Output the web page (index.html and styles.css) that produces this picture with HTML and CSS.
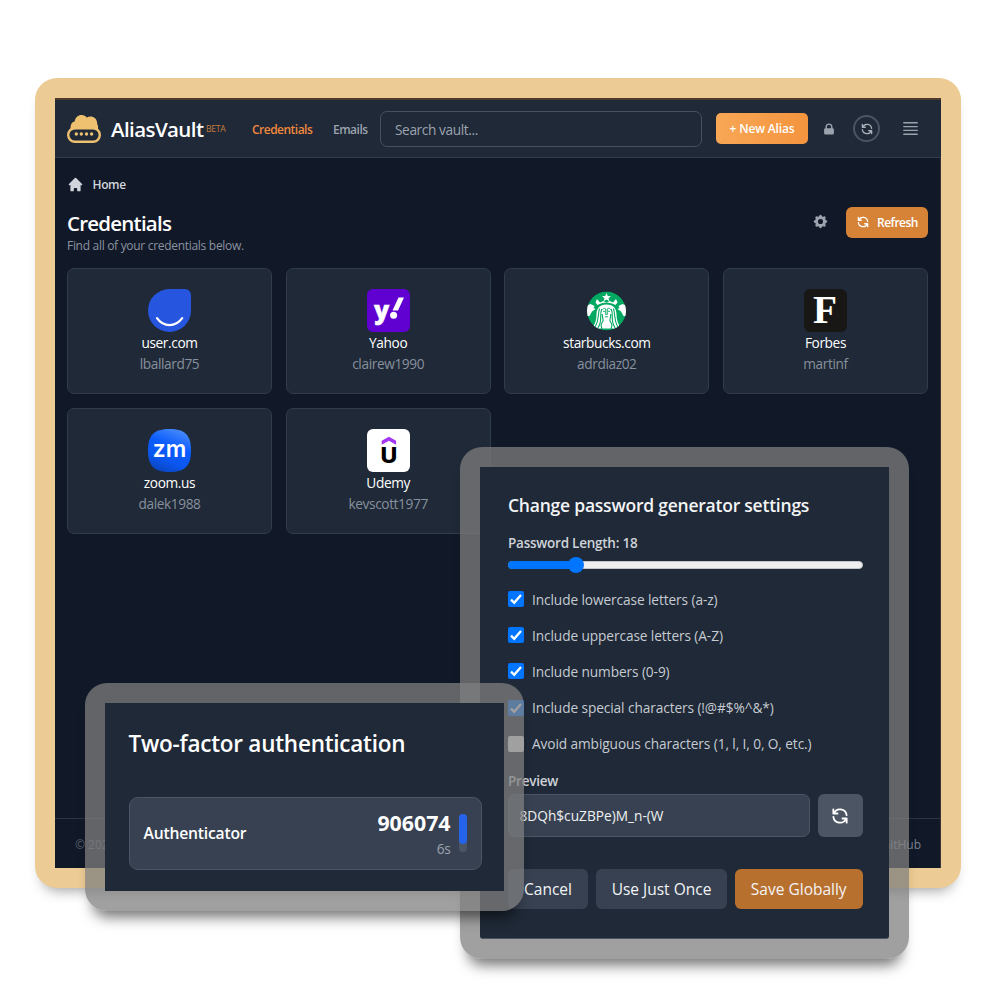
FILE: index.html
```html
<!DOCTYPE html>
<html lang="en">
<head>
<meta charset="utf-8">
<title>AliasVault</title>
<link rel="stylesheet" href="styles.css">
</head>
<body>
<svg width="0" height="0" class="defs">
  <symbol id="sync" viewBox="0 0 24 24"><path fill="none" stroke="currentColor" stroke-width="2.200" stroke-linecap="round" stroke-linejoin="round" d="M4 4v5h.582m15.356 2A8.001 8.001 0 004.582 9m0 0H9m11 11v-5h-.581m0 0a8.003 8.003 0 01-15.357-2m15.357 2H15"/></symbol>
</svg>

<section class="window vault">
  <div class="app">
    <header class="topbar">
      <svg class="brand-mark" viewBox="0 0 34 28">
        <path fill="#eec170" d="M3.600 14.500C3 9.500 5 7 7.600 6.600 8.300 2.500 11 0 14.600 0 17 0 18.800 1 19.800 2.500 24-.2 30.500 2.500 30.200 9c1 1.500 1.200 3.500.6 5.500z"/>
        <rect x="1.200" y="13.200" width="31.600" height="13.600" rx="6.800" fill="#1f2937" stroke="#eec170" stroke-width="2.400"/>
        <g fill="#eec170"><circle cx="9.300" cy="19" r="1.700"/><circle cx="14.300" cy="19" r="1.700"/><circle cx="19.500" cy="19" r="1.700"/><circle cx="24.600" cy="19" r="1.700"/></g>
      </svg>
      <span class="brand-name">AliasVault</span><sup class="beta">BETA</sup>
      <nav class="nav"><a class="active">Credentials</a><a>Emails</a></nav>
      <div class="search">Search vault...</div>
      <button class="new-alias">+ New Alias</button>
      <svg class="lock" viewBox="0 0 20 20"><path fill="currentColor" fill-rule="evenodd" d="M5 9V7a5 5 0 0110 0v2a2 2 0 012 2v5a2 2 0 01-2 2H5a2 2 0 01-2-2v-5a2 2 0 012-2zm8-2v2H7V7a3 3 0 016 0z"/></svg>
      <span class="sync-ring"><svg><use href="#sync"/></svg></span>
      <svg class="menu" viewBox="0 0 15 13"><path stroke="currentColor" stroke-width="1.400" stroke-linecap="round" d="M.8 .8h13.400M.8 4.600h13.400M.8 8.400h13.400M.8 12.200h13.400"/></svg>
    </header>

    <main class="page">
      <div class="crumb">
        <svg viewBox="0 0 20 20"><path fill="currentColor" d="M10.707 2.293a1 1 0 00-1.414 0l-7 7a1 1 0 001.414 1.414L4 10.414V17a1 1 0 001 1h2a1 1 0 001-1v-2a1 1 0 011-1h2a1 1 0 011 1v2a1 1 0 001 1h2a1 1 0 001-1v-6.586l.293.293a1 1 0 001.414-1.414l-7-7z"/></svg>
        <span>Home</span>
      </div>
      <div class="heading">
        <div class="heading-text">
          <h1>Credentials</h1>
          <p>Find all of your credentials below.</p>
        </div>
        <svg class="cog" viewBox="0 0 20 20"><path fill="currentColor" fill-rule="evenodd" d="M11.490 3.170c-.38-1.560-2.600-1.560-2.980 0a1.532 1.532 0 01-2.286.948c-1.372-.836-2.942.734-2.106 2.106.54.886.061 2.042-.947 2.287-1.561.379-1.561 2.600 0 2.978a1.532 1.532 0 01.947 2.287c-.836 1.372.734 2.942 2.106 2.106a1.532 1.532 0 012.287.947c.379 1.561 2.600 1.561 2.978 0a1.533 1.533 0 012.287-.947c1.372.836 2.942-.734 2.106-2.106a1.533 1.533 0 01.947-2.287c1.561-.379 1.561-2.600 0-2.978a1.532 1.532 0 01-.947-2.287c.836-1.372-.734-2.942-2.106-2.106a1.532 1.532 0 01-2.287-.947zM10 13a3 3 0 100-6 3 3 0 000 6z"/></svg>
        <button class="refresh"><svg><use href="#sync"/></svg><span>Refresh</span></button>
      </div>

      <div class="cards">
        <article class="card">
          <svg viewBox="0 0 43 43"><path fill="#2656e0" d="M21.500 0H37a6 6 0 016 6v15.500A21.500 21.500 0 1121.500 0z"/><path fill="none" stroke="#fff" stroke-width="2.200" stroke-linecap="round" d="M9 29.200c6.500 9.300 18.500 9.300 25.200 0"/></svg>
          <b>user.com</b><i>lballard75</i>
        </article>
        <article class="card">
          <svg viewBox="0 0 43 43"><rect width="43" height="43" rx="6" fill="#6001d2"/><text class="logo-y" x="7" y="30">y</text><path fill="#fff" d="M31.500 8.500H37L31 21.500h-5.500z"/><circle cx="26.600" cy="26.300" r="3.500" fill="#fff"/></svg>
          <b>Yahoo</b><i>clairew1990</i>
        </article>
        <article class="card">
          <svg viewBox="0 0 43 43">
            <clipPath id="disc"><circle cx="21.500" cy="22" r="19.500"/></clipPath>
            <g clip-path="url(#disc)">
              <circle cx="21.500" cy="22" r="19.500" fill="#00a862"/>
              <path fill="#fff" d="M21.500 4l1.300 3 3.200.2-2.500 2 .9 3.100-2.900-1.700-2.900 1.700.9-3.100-2.500-2 3.200-.2zM12 10l3 3.500 3.500-1.500 3 2 3-2 3.500 1.500L31 10l1.500 3.500-2 2.500c-5.500-3.400-12.500-3.400-18 0l-2-2.500z"/>
              <path fill="#fff" d="M21.500 15.500c-7 0-10 4-10 10 0 5-1.500 10-4.500 14h29c-3-4-4.500-9-4.500-14 0-6-3-10-10-10z"/>
              <path fill="#fff" d="M1 17l4.500-2 4 2-1 2 2 1-3.500 2.500-2.500 4.500-4 .5zM42 17l-4.500-2-4 2 1 2-2 1 3.500 2.500 2.500 4.500 4 .5z"/>
              <path fill="none" stroke="#00a862" stroke-width="1.100" d="M14.500 19.500c-2 7 0 11-4.500 19M16.800 20c-3 7 1.500 11-4 19M28.500 19.500c2 7 0 11 4.500 19M26.200 20c3 7-1.500 11 4 19M17.200 25c0 5 2 6 .3 8-2 2.500-1.500 4-.5 7M25.800 25c0 5-2 6-.3 8 2 2.500 1.500 4 .5 7"/>
              <path fill="none" stroke="#00a862" stroke-width=".9" d="M17.300 20.500c1.500-1.500 2.700-1.500 3.400-.5v5.500h1.600V20c.7-1 1.900-1 3.400.5M18 22.300h2M23 22.300h2M19.900 27.800h3.200"/>
            </g>
          </svg>
          <b>starbucks.com</b><i>adrdiaz02</i>
        </article>
        <article class="card">
          <svg viewBox="0 0 43 43"><rect width="43" height="43" rx="6" fill="#181716"/><text class="logo-f" x="9" y="34" textLength="24" lengthAdjust="spacingAndGlyphs">F</text></svg>
          <b>Forbes</b><i>martinf</i>
        </article>
        <article class="card">
          <svg viewBox="0 0 43 43"><defs><linearGradient id="zg" x1=".75" y1="0" x2=".35" y2="1"><stop offset="0" stop-color="#4a8df8"/><stop offset=".4" stop-color="#0b5cff"/><stop offset=".75" stop-color="#0b56ee"/><stop offset="1" stop-color="#0a47c4"/></linearGradient></defs><path fill="url(#zg)" d="M21.500 0C37 0 43 6 43 21.500S37 43 21.500 43 0 37 0 21.500 6 0 21.500 0z"/><text class="logo-zm" x="4.800" y="27.800" textLength="33.500" lengthAdjust="spacingAndGlyphs">zm</text></svg>
          <b>zoom.us</b><i>dalek1988</i>
        </article>
        <article class="card">
          <svg viewBox="0 0 43 43"><rect width="43" height="43" rx="6" fill="#fff"/><path fill="#a435f0" d="M21.900 7.700l7.200 4.100v4l-7.200-4.100-7.200 4.100v-4z"/><text class="logo-u" x="13.500" y="34.200" textLength="16.800" lengthAdjust="spacingAndGlyphs">U</text></svg>
          <b>Udemy</b><i>kevscott1977</i>
        </article>
      </div>
    </main>

    <footer class="footer"><span>© 2024 AliasVault</span><span>GitHub</span></footer>
  </div>
</section>

<section class="window generator">
  <div class="panel settings">
    <h2>Change password generator settings</h2>
    <div class="field-label">Password Length: 18</div>
    <div class="slider"><div class="fill"></div></div>
    <ul class="options">
      <li><span class="box on"><svg viewBox="0 0 16 16"><path d="M3 8.600l3.200 3.200L13 3.900"/></svg></span>Include lowercase letters (a-z)</li>
      <li><span class="box on"><svg viewBox="0 0 16 16"><path d="M3 8.600l3.200 3.200L13 3.900"/></svg></span>Include uppercase letters (A-Z)</li>
      <li><span class="box on"><svg viewBox="0 0 16 16"><path d="M3 8.600l3.200 3.200L13 3.900"/></svg></span>Include numbers (0-9)</li>
      <li><span class="box on"><svg viewBox="0 0 16 16"><path d="M3 8.600l3.200 3.200L13 3.900"/></svg></span>Include special characters (!@#$%^&amp;*)</li>
      <li><span class="box"></span>Avoid ambiguous characters (1, l, I, 0, O, etc.)</li>
    </ul>
    <div class="field-label">Preview</div>
    <div class="preview">
      <div class="preview-value">8DQh$cuZBPe)M_n-(W</div>
      <button class="again"><svg><use href="#sync"/></svg></button>
    </div>
    <div class="actions">
      <button class="cancel">Cancel</button>
      <button class="once">Use Just Once</button>
      <button class="save">Save Globally</button>
    </div>
  </div>
</section>

<section class="window twofactor">
  <div class="panel totp">
    <h2>Two-factor authentication</h2>
    <div class="code-row">
      <span class="code-name">Authenticator</span>
      <div class="code"><strong>906074</strong><small>6s</small></div>
      <div class="timer"><div></div></div>
    </div>
  </div>
</section>
</body>
</html>
```
FILE: styles.css
```css
* { box-sizing: border-box; margin: 0; padding: 0; }
body {
  position: relative;
  width: 1000px;
  height: 1000px;
  overflow: hidden;
  background: #fff;
  font-family: "Open Sans", "Noto Sans", sans-serif;
  color: #fff;
}
button { border: 0; font: inherit; color: inherit; letter-spacing: inherit; white-space: nowrap; }
svg { display: block; flex: none; }
span, b, i, strong, small, a, h1, h2, p { white-space: nowrap; }
.defs { position: absolute; }

/* Overlapping windows on the canvas */
.window {
  position: absolute;
  border-radius: 22px;
  padding: 20px;
  box-shadow: 0 14px 14px -8px rgba(0, 0, 0, .55);
}
.vault { left: 35px; top: 78px; width: 926px; height: 809.500px; background: #eccb94; box-shadow: 0 10px 14px -8px rgba(0, 0, 0, .4); }
.generator { left: 460px; top: 447px; width: 449px; height: 512px; background: rgba(127, 127, 127, .74); }
.twofactor { left: 85px; top: 683px; width: 439px; height: 228px; background: rgba(127, 127, 127, .74); }

/* Vault app */
.app { height: 100%; display: flex; flex-direction: column; background: #111827; border-top: 2px solid #4f3a2c; box-shadow: inset -1px 0 #3a3238; }
.topbar {
  display: flex;
  align-items: center;
  height: 58px;
  padding: 1px 22px 0 12px;
  background: #1f2937;
  border-bottom: 1px solid #303c4b;
  flex: none;
}
.brand-mark { width: 34px; height: 28px; margin-top: -1px; }
.brand-name { margin-left: 10px; font-size: 20.500px; font-weight: 600; width: 94px; letter-spacing: -.029em; }
.beta { margin-left: 1px; font-size: 8.700px; color: #c87a3c; width: 20px; line-height: 12px; letter-spacing: -.04em; }
.nav { display: flex; gap: 20px; margin-left: 26px; font-size: 12px; font-weight: 600; color: #9ca3af; letter-spacing: -.043em; }
.nav .active { color: #f0883e; width: 61px; }
.nav a { width: 35px; }
.search { flex: none; width: 322px; height: 36px; margin: -1px 0 0 12px; border: 1px solid #465160; border-radius: 7px; padding-left: 14px; font-size: 13.700px; line-height: 35px; color: #9ca3af; letter-spacing: -.029em; }
.new-alias { width: 92px; height: 31px; margin-top: -1px; margin-left: 14px; border-radius: 5px; background: linear-gradient(90deg, #f8a755, #f4943f); font-size: 12px; font-weight: 600; line-height: 32px; letter-spacing: -.012em; }
.lock { width: 14px; height: 14px; margin-left: 14px; color: #9ca3af; }
.sync-ring { display: flex; align-items: center; justify-content: center; width: 27px; height: 27px; margin-left: 17px; border: 2px solid #4b5563; border-radius: 50%; color: #aab0ba; margin-top: -1px; }
.sync-ring svg { width: 14px; height: 14px; }
.menu { width: 15px; height: 13px; margin-left: 23px; color: #9ca3af; margin-top: -1px; }

.page { flex: 1; padding: 16px 13px 0 12px; }
.crumb { display: flex; align-items: center; height: 20px; font-size: 12px; font-weight: 600; color: #d1d5db; letter-spacing: -.03em; }
.crumb svg { width: 17px; height: 17px; margin-right: 8.500px; }
.heading { display: flex; align-items: flex-start; margin-top: 12px; height: 54px; }
.heading-text { flex: 1; }
h1 { font-size: 20.500px; line-height: 28px; font-weight: 600; margin-top: 3px; letter-spacing: -.038em; }
.heading p { font-size: 12px; line-height: 18px; color: #8b93a1; letter-spacing: -.025em; }
.cog { width: 17px; height: 17px; color: #9ca3af; margin: 7px 17px 0 0; }
.refresh { display: flex; align-items: center; justify-content: space-between; width: 82px; height: 31px; padding: 0 10px; margin-top: .5px; border-radius: 6px; background: #d68338; font-size: 12px; font-weight: 600; letter-spacing: -.041em; }
.refresh svg { width: 14px; height: 14px; }
.cards { display: grid; grid-template-columns: repeat(4, 205px); justify-content: space-between; row-gap: 13.500px; margin-top: 7.500px; }
.card { display: flex; flex-direction: column; align-items: center; height: 126.500px; padding-top: 20.500px; border: 1px solid #303c4a; border-radius: 7px; background: #1f2937; font-size: 13.700px; letter-spacing: -.029em; }
.card svg { width: 43px; height: 43px; overflow: visible; }
.card text { letter-spacing: 0; }
.card b { font-weight: 400; line-height: 20px; margin-top: .5px; }
.card i { font-style: normal; line-height: 20px; color: #87909d; margin-top: 1px; }
.logo-y { font: 800 25px "Open Sans", sans-serif; fill: #fff; stroke: #fff; stroke-width: .5px; }
.logo-f { font: 700 40px "Liberation Serif", serif; fill: #fff; }
.logo-zm { font: 600 24px "Inter", sans-serif; fill: #fff; }
.logo-u { font: 800 21.500px "Inter", sans-serif; fill: #000; }
.footer { display: flex; justify-content: space-between; height: 50px; padding: 0 20px; border-top: 1px solid #2b3543; font-size: 12px; line-height: 51px; color: #59616f; }
.footer span:last-child { color: #7b8492; }

/* Floating panels */
.panel { height: 100%; background: #1f2937; }
.settings { display: flex; flex-direction: column; padding: 24px 26.500px 0 28px; border-radius: 0 0 3px 3px; border-bottom: 1px solid #4a5568; }
.settings h2 { font-size: 17.500px; font-weight: 600; line-height: 28px; color: #f3f4f6; letter-spacing: -.013em; }
.field-label { font-size: 13.500px; font-weight: 600; line-height: 20px; color: #cfd3d9; margin-top: 14px; letter-spacing: -.018em; }
.slider { display: flex; height: 8px; margin-top: 7.500px; border-radius: 4px; background: #efefef; border: 1px solid #c4c6c9; flex: none; }
.fill { position: relative; width: 68px; height: 8px; margin: -1px 0 0 -1px; border-radius: 4px; background: #0075ff; }
.fill::after { content: ""; position: absolute; left: 60px; top: -4px; width: 16px; height: 16px; border-radius: 50%; background: #0075ff; }
.options { list-style: none; margin-top: 12.500px; flex: none; }
.options li { display: flex; align-items: center; height: 36.200px; font-size: 13.700px; color: #c6cbd2; letter-spacing: -.007em; white-space: nowrap; }
.box { width: 16px; height: 16px; margin-right: 8px; border-radius: 2px; background: #fff; }
.box.on { background: #0075ff; }
.box path { fill: none; stroke: #fff; stroke-width: 2.300; }
.options + .field-label { margin-top: 9.500px; }
.preview { display: flex; justify-content: space-between; height: 42.500px; margin-top: 3px; flex: none; }
.preview-value { width: 302px; padding-left: 10.500px; border: 1px solid #4b5563; border-radius: 7px; background: #374151; font-size: 13.700px; line-height: 41px; color: #f0f1f3; }
.again { display: flex; align-items: center; justify-content: center; width: 44.500px; border-radius: 6px; background: #4b5563; }
.again svg { width: 20px; height: 20px; }
.actions { display: flex; justify-content: space-between; height: 40px; margin-top: 32px; font-size: 15.500px; line-height: 41px; color: #f3f4f6; }
.actions button { border-radius: 6px; background: #374151; }
.cancel { width: 80px; }
.once { width: 131.500px; }
.actions .save { width: 127.500px; background: #b8702e; }

.totp { padding: 25px 22.500px 0 23.500px; }
.totp h2 { font-size: 22.500px; font-weight: 600; line-height: 32px; letter-spacing: -.011em; }
.code-row { display: flex; align-items: center; height: 73px; margin-top: 36.500px; padding: 0 14px; border: 1px solid #4b5563; border-radius: 9px; background: #374151; }
.code-name { flex: 1; font-size: 15.700px; font-weight: 600; letter-spacing: -.013em; }
.code { display: flex; flex-direction: column; align-items: flex-end; margin-right: 8px; padding-top: 2px; }
.code strong { font-size: 21.300px; line-height: 28px; font-weight: 700; }
.code small { font-size: 13.700px; line-height: 20px; color: #9ca3af; margin-top: 1.500px; letter-spacing: -.02em; }
.timer { width: 8px; height: 38px; border-radius: 4px; background: #4b5563; }
.timer div { height: 30px; border-radius: 4px; background: #2563eb; }
```
